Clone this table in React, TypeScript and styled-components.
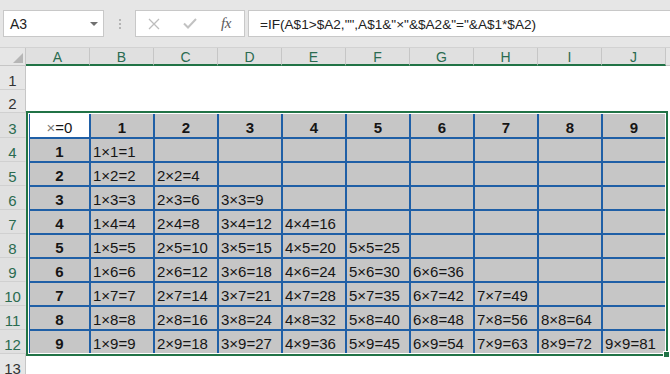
import React from 'react';
import styled, { createGlobalStyle } from 'styled-components';

const GREEN = '#217346';
const GRID_BLUE = '#1f5fa6';
const CELL_GRAY = '#c6c6c6';
const HEAD_BG = '#e6e6e6';
const HEAD_SEL_BG = '#e0e0e0';
const HEAD_LINE = '#c6c6c6';

const COLUMNS = ['A', 'B', 'C', 'D', 'E', 'F', 'G', 'H', 'I', 'J'];
const FORMULA = '=IF(A$1>$A2,"",A$1&"×"&$A2&"="&A$1*$A2)';

// row header heights for rows 1..13
const ROW_HEIGHTS = [24, 23, 25, 24, 24, 24, 24, 24, 24, 24, 24, 24, 24];

const GlobalStyle = createGlobalStyle`
  html, body {
    margin: 0;
    padding: 0;
    background: #ffffff;
  }
  body {
    font-family: "Liberation Sans", Arial, sans-serif;
    overflow: hidden;
  }
`;

const Window = styled.div`
  width: 670px;
  height: 374px;
  overflow: hidden;
  display: flex;
  flex-direction: column;
  background: #ffffff;
`;

const FormulaBar = styled.div`
  height: 48px;
  box-sizing: border-box;
  flex-shrink: 0;
  background: #e6e6e6;
  border-bottom: 1px solid #d2d2d2;
  display: flex;
  align-items: flex-start;
  padding: 10px 0 0 3px;
`;

const FieldBox = styled.div<{ $width?: number }>`
  height: 27px;
  box-sizing: border-box;
  ${(p) => (p.$width ? `width: ${p.$width}px; flex-shrink: 0;` : 'flex: 1; margin-right: -1px;')}
  background: #ffffff;
  border: 1px solid #c8c8c8;
  display: flex;
  align-items: center;
  color: #222222;
  font-size: 14px;
`;

const NameText = styled.span`
  flex: 1;
  padding-left: 6px;
  padding-top: 1px;
`;

const Caret = styled.span`
  width: 0;
  height: 0;
  margin-right: 5px;
  border-left: 4px solid transparent;
  border-right: 4px solid transparent;
  border-top: 4px solid #707070;
`;

const Grip = styled.div`
  width: 31px;
  height: 27px;
  flex-shrink: 0;
  display: flex;
  flex-direction: column;
  align-items: center;
  justify-content: center;
  gap: 2px;
`;

const GripDot = styled.span`
  width: 2px;
  height: 2px;
  background: #b4b4b4;
`;

const ActionBox = styled(FieldBox)`
  justify-content: space-around;
  margin-right: 3px;
`;

const ActionSlot = styled.span`
  width: 24px;
  display: flex;
  align-items: center;
  justify-content: center;
`;

const FxLabel = styled.span`
  font-family: "Liberation Serif", "Times New Roman", serif;
  font-style: italic;
  font-size: 15px;
  color: #5a5a5a;
  letter-spacing: -0.5px;
`;

const FormulaText = styled.span`
  padding-left: 11px;
  padding-top: 1px;
  font-size: 13.6px;
  white-space: nowrap;
`;

const Sheet = styled.div`
  flex: 1;
  min-height: 0;
  display: grid;
  grid-template-columns: 26px 1fr;
  grid-template-rows: 18px 1fr;
`;

const Corner = styled.div`
  background: ${HEAD_BG};
  box-sizing: border-box;
  border-right: 1px solid ${HEAD_LINE};
  border-bottom: 1px solid ${HEAD_LINE};
  display: flex;
  align-items: flex-end;
  justify-content: flex-end;
  padding: 0 2px 2px 0;
`;

const ColumnHeaders = styled.div`
  display: flex;
`;

const ColHead = styled.div<{ $selected?: boolean }>`
  width: 64px;
  flex-shrink: 0;
  box-sizing: border-box;
  background: ${(p) => (p.$selected ? HEAD_SEL_BG : HEAD_BG)};
  border-right: 1px solid ${HEAD_LINE};
  border-bottom: ${(p) => (p.$selected ? `2px solid ${GREEN}` : `1px solid ${HEAD_LINE}`)};
  color: ${(p) => (p.$selected ? '#2a6b50' : '#444444')};
  font-size: 14px;
  display: flex;
  align-items: center;
  justify-content: center;
  padding-top: 1px;
`;

const ColFiller = styled.div`
  flex: 1;
  background: ${HEAD_BG};
  border-bottom: 1px solid ${HEAD_LINE};
`;

const RowHeaders = styled.div`
  display: flex;
  flex-direction: column;
`;

const RowHead = styled.div<{ $selected?: boolean }>`
  flex-shrink: 0;
  box-sizing: border-box;
  background: ${(p) => (p.$selected ? HEAD_SEL_BG : HEAD_BG)};
  border-bottom: 1px solid #d0d0d0;
  border-right: 1px solid ${(p) => (p.$selected ? HEAD_SEL_BG : HEAD_LINE)};
  color: ${(p) => (p.$selected ? '#2a6b50' : '#333333')};
  font-size: 15px;
  line-height: 15px;
  display: flex;
  align-items: flex-end;
  justify-content: center;
  padding-bottom: 1px;
`;

const Body = styled.div`
  display: flex;
  flex-direction: column;
  align-items: flex-start;
`;

const BlankRows = styled.div`
  height: 45px;
  flex-shrink: 0;
`;

const Selection = styled.div`
  position: relative;
  border: 2px solid ${GREEN};
  padding: 1px;
  background: #ffffff;
`;

const FillHandle = styled.span`
  position: absolute;
  right: -4px;
  bottom: -4px;
  width: 5px;
  height: 5px;
  background: ${GREEN};
  border: 1px solid #ffffff;
`;

const Table = styled.div`
  display: grid;
  grid-template-columns: 59px repeat(9, 62px);
  grid-template-rows: 23px repeat(9, 22px);
  gap: 2px;
  background: ${GRID_BLUE};
  border-left: 1px solid ${GRID_BLUE};
`;

const Cell = styled.div<{ $head?: boolean; $blank?: boolean }>`
  background: ${(p) => (p.$blank ? '#ffffff' : CELL_GRAY)};
  color: #151515;
  font-size: 15px;
  font-weight: ${(p) => (p.$head ? 700 : 400)};
  display: flex;
  align-items: center;
  justify-content: ${(p) => (p.$head || p.$blank ? 'center' : 'flex-start')};
  padding: 3px 0 0 ${(p) => (p.$head || p.$blank ? 0 : 2)}px;
  box-sizing: border-box;
  white-space: nowrap;
`;

const Times = styled.span`
  color: #7a7a7a;
`;

const CancelIcon = () => (
  <svg width="12" height="12" viewBox="0 0 12 12">
    <path d="M1 1 L11 11 M11 1 L1 11" stroke="#bdbdbd" strokeWidth="1.3" fill="none" />
  </svg>
);

const EnterIcon = () => (
  <svg width="14" height="11" viewBox="0 0 14 11">
    <path d="M1 5.5 L5 9.5 L13 1" stroke="#c2c2c2" strokeWidth="2" fill="none" />
  </svg>
);

const SelectAllMark = () => (
  <svg width="10" height="10" viewBox="0 0 10 10">
    <polygon points="10,0 10,10 0,10" fill="#b6b6b6" />
  </svg>
);

const Toolbar = () => (
  <FormulaBar>
    <FieldBox $width={101}>
      <NameText>A3</NameText>
      <Caret />
    </FieldBox>
    <Grip>
      <GripDot />
      <GripDot />
      <GripDot />
    </Grip>
    <ActionBox $width={110}>
      <ActionSlot><CancelIcon /></ActionSlot>
      <ActionSlot><EnterIcon /></ActionSlot>
      <ActionSlot><FxLabel>fx</FxLabel></ActionSlot>
    </ActionBox>
    <FieldBox>
      <FormulaText>{FORMULA}</FormulaText>
    </FieldBox>
  </FormulaBar>
);

const TimesTable = () => {
  const cells: React.ReactNode[] = [];
  cells.push(
    <Cell key="corner" $blank>
      <Times>×</Times>=0
    </Cell>
  );
  for (let c = 1; c <= 9; c++) {
    cells.push(<Cell key={`h${c}`} $head>{c}</Cell>);
  }
  for (let r = 1; r <= 9; r++) {
    cells.push(<Cell key={`r${r}`} $head>{r}</Cell>);
    for (let c = 1; c <= 9; c++) {
      cells.push(
        <Cell key={`${r}-${c}`}>{c <= r ? `${c}×${r}=${c * r}` : ''}</Cell>
      );
    }
  }
  return <Table>{cells}</Table>;
};

export default function App() {
  return (
    <Window>
      <GlobalStyle />
      <Toolbar />
      <Sheet>
        <Corner>
          <SelectAllMark />
        </Corner>
        <ColumnHeaders>
          {COLUMNS.map((col) => (
            <ColHead key={col} $selected>{col}</ColHead>
          ))}
          <ColFiller />
        </ColumnHeaders>
        <RowHeaders>
          {ROW_HEIGHTS.map((h, i) => (
            <RowHead key={i} $selected={i >= 2 && i <= 11} style={{ height: h }}>
              {i + 1}
            </RowHead>
          ))}
        </RowHeaders>
        <Body>
          <BlankRows />
          <Selection>
            <TimesTable />
            <FillHandle />
          </Selection>
        </Body>
      </Sheet>
    </Window>
  );
}
